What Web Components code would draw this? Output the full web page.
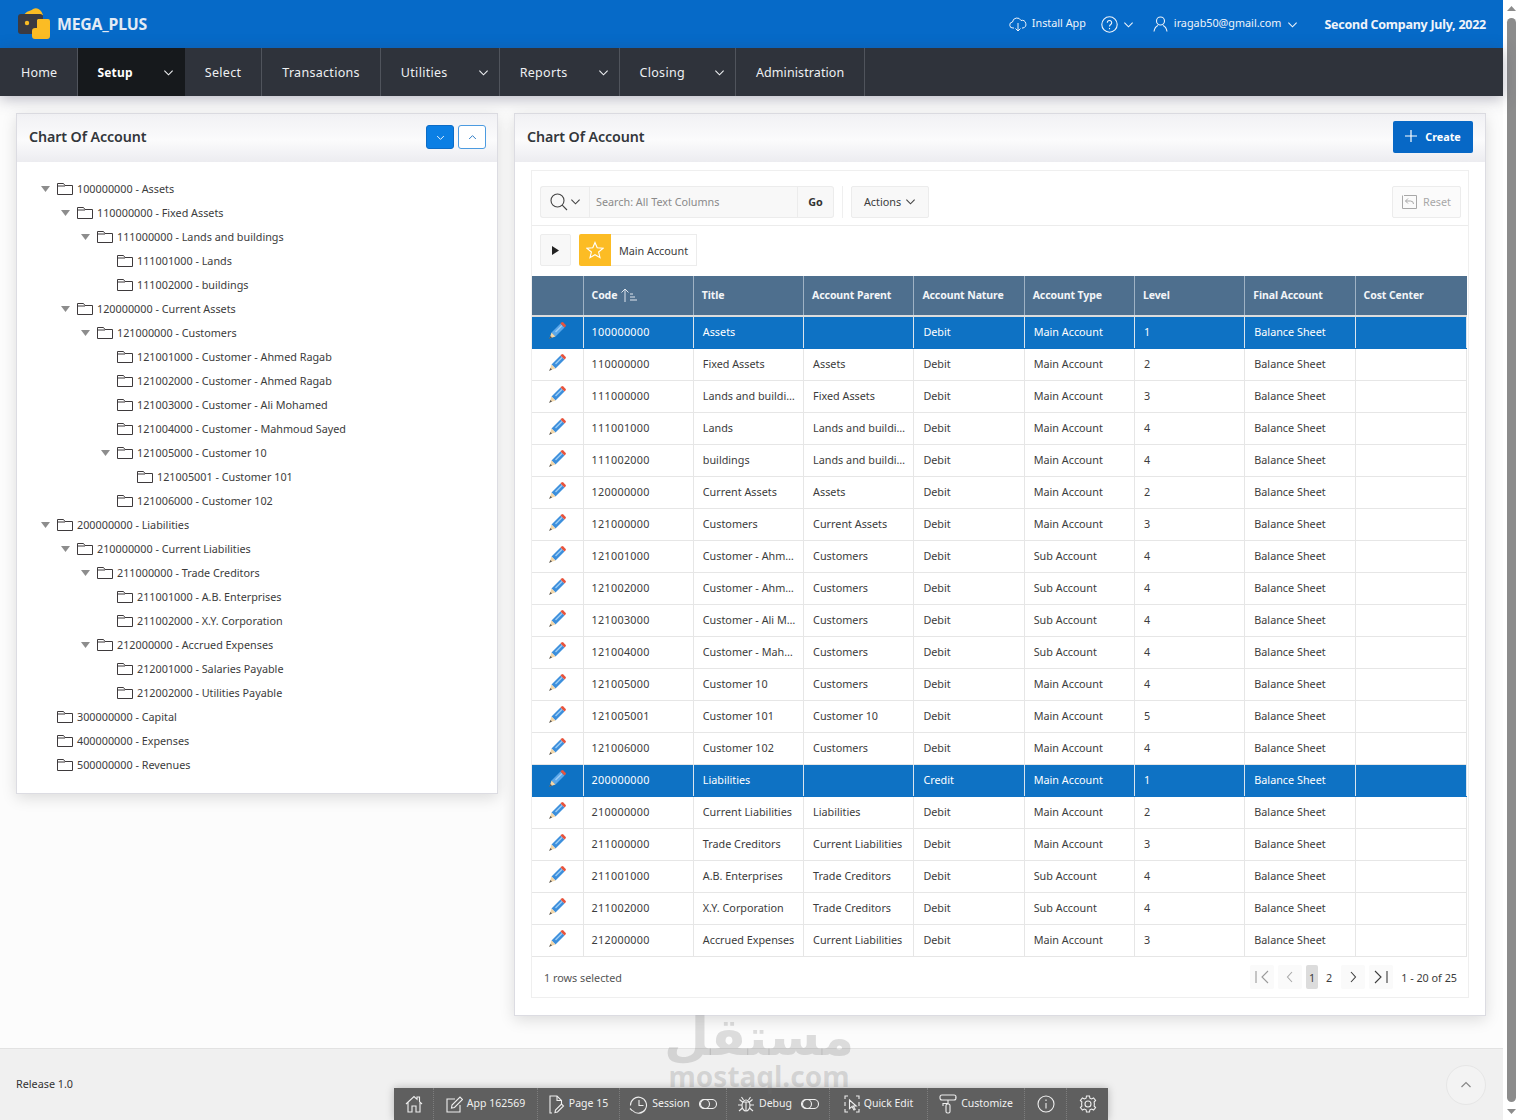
<!DOCTYPE html>
<html>
  <head>
    <meta charset="utf-8" />
    <title>Chart Of Account</title>
    <style>
      html, body { margin: 0; height: 1120px; overflow: hidden; }
      body { font: 11px "Noto Sans", sans-serif; color: #3c3c3c; background: #fcfcfc; }
    </style>
  </head>
  <body>
    <app-shell>
      <top-bar></top-bar>
      <main-nav>
        <nav-item first>Home</nav-item>
        <nav-item current caret>Setup</nav-item>
        <nav-item>Select</nav-item>
        <nav-item>Transactions</nav-item>
        <nav-item caret>Utilities</nav-item>
        <nav-item caret>Reports</nav-item>
        <nav-item caret style="--gap: 29px">Closing</nav-item>
        <nav-item style="--ls: .1px">Administration</nav-item>
      </main-nav>
      <page-body>
        <tree-panel>
          <tree-node open label="100000000 - Assets">
            <tree-node open label="110000000 - Fixed Assets">
              <tree-node open label="111000000 - Lands and buildings">
                <tree-node leaf label="111001000 - Lands"></tree-node>
                <tree-node leaf label="111002000 - buildings"></tree-node>
              </tree-node>
            </tree-node>
            <tree-node open label="120000000 - Current Assets">
              <tree-node open label="121000000 - Customers">
                <tree-node leaf label="121001000 - Customer - Ahmed Ragab"></tree-node>
                <tree-node leaf label="121002000 - Customer - Ahmed Ragab"></tree-node>
                <tree-node leaf label="121003000 - Customer - Ali Mohamed"></tree-node>
                <tree-node leaf label="121004000 - Customer - Mahmoud Sayed"></tree-node>
                <tree-node open label="121005000 - Customer 10">
                  <tree-node leaf label="121005001 - Customer 101"></tree-node>
                </tree-node>
                <tree-node leaf label="121006000 - Customer 102"></tree-node>
              </tree-node>
            </tree-node>
          </tree-node>
          <tree-node open label="200000000 - Liabilities">
            <tree-node open label="210000000 - Current Liabilities">
              <tree-node open label="211000000 - Trade Creditors">
                <tree-node leaf label="211001000 - A.B. Enterprises"></tree-node>
                <tree-node leaf label="211002000 - X.Y. Corporation"></tree-node>
              </tree-node>
              <tree-node open label="212000000 - Accrued Expenses">
                <tree-node leaf label="212001000 - Salaries Payable"></tree-node>
                <tree-node leaf label="212002000 - Utilities Payable"></tree-node>
              </tree-node>
            </tree-node>
          </tree-node>
          <tree-node leaf label="300000000 - Capital"></tree-node>
          <tree-node leaf label="400000000 - Expenses"></tree-node>
          <tree-node leaf label="500000000 - Revenues"></tree-node>
        </tree-panel>
        <report-panel>
          <grid-toolbar></grid-toolbar>
          <report-grid></report-grid>
          <grid-footer></grid-footer>
        </report-panel>
      </page-body>
      <page-footer></page-footer>
    </app-shell>

    <script>
      const FONT = '"Noto Sans", sans-serif';
      const chevron = (size, color, up) =>
        `<svg width="${size}" height="${size}" viewBox="0 0 12 12" fill="none" stroke="${color}" stroke-width="1.2"><path d="${up ? "M1.5 8 6 3.5 10.5 8" : "M1.5 4 6 8.5 10.5 4"}"/></svg>`;

      function makeRoot(el, html) {
        el.attachShadow({ mode: "open" }).innerHTML = html;
      }

      class AppShell extends HTMLElement {
        constructor() {
          super();
          makeRoot(this, `<style>
            :host { display: flex; width: 1519px; height: 1120px; position: relative; overflow: hidden; }
            .main { width: 1503px; display: flex; flex-direction: column; }
            .scroll { width: 16px; background: #fff; display: flex; flex-direction: column; align-items: center; }
            .arrow { height: 17px; display: flex; align-items: center; justify-content: center; }
            .thumb { flex: 1; width: 9px; border-radius: 5px; background: #8c8c8c; margin-top: 1px; margin-bottom: 1px; }
          </style>
          <div class="main"><slot></slot></div>
          <div class="scroll">
            <div class="arrow"><svg width="9" height="5"><path d="M0 5 4.5 0 9 5z" fill="#8c8c8c"/></svg></div>
            <div class="thumb"></div>
            <div class="arrow"><svg width="9" height="5"><path d="M0 0 4.5 5 9 0z" fill="#8c8c8c"/></svg></div>
          </div>`);
        }
      }

      class TopBar extends HTMLElement {
        constructor() {
          super();
          makeRoot(this, `<style>
            :host { display: flex; align-items: center; height: 48px; background: #066ac8; color: #f0f4fa; font-family: ${FONT}; flex: none; }
            .brand { display: flex; align-items: center; margin-left: 18px; font-size: 15.800px; font-weight: 700; color: #e3ebf5; letter-spacing: -.2px; }
            .brand svg { margin-right: 6px; }
            .right { margin-left: auto; display: flex; align-items: center; padding-right: 17px; font-size: 10.800px; }
            .right svg { display: block; }
            .right span { margin-top: -3px; }
            .install { display: flex; align-items: center; gap: 5px; margin-right: 15px; }
            .help { display: flex; align-items: center; gap: 5px; margin-right: 19px; }
            .user { display: flex; align-items: center; gap: 6px; margin-right: 26px; }
            .co { font-size: 12.500px; font-weight: 700; letter-spacing: -.25px; }
          </style>
          <div class="brand">
            <svg width="33" height="32" viewBox="0 0 33 32">
              <path d="M6 7C8 3 13 3 15 1c4-2 8 0 10 6z" fill="#fbbc24"/>
              <rect x="0" y="6" width="25" height="20" rx="3" fill="#3b3a41"/>
              <circle cx="9" cy="15" r="2.200" fill="#fbbc24"/>
              <path d="M20 11h10a2 2 0 0 1 2 2v15a3 3 0 0 1-3 3H17a3 3 0 0 1-3-3v-5a3 3 0 0 1 3-3h2v-8z" fill="#fbbc24"/>
            </svg>
            MEGA_PLUS
          </div>
          <div class="right">
            <div class="install">
              <svg width="18" height="16" viewBox="0 0 18 16" fill="none" stroke="#eef3fa" stroke-width="1"><path d="M5 12H4a3 3 0 0 1-.5-6A4.5 4.5 0 0 1 12 4.5 3.7 3.7 0 0 1 14 12h-1"/><path d="M9 7v8M6.5 12.5 9 15l2.500-2.500"/></svg>
              <span>Install App</span>
            </div>
            <div class="help">
              <svg width="17" height="17" viewBox="0 0 17 17" fill="none" stroke="#eef3fa" stroke-width="1.1"><circle cx="8.500" cy="8.500" r="7.700"/><path d="M6.300 6.700a2.200 2.200 0 1 1 3.400 1.800c-.9.600-1.200 1-1.200 2"/><path d="M8.500 12v1.200"/></svg>
              ${chevron(11, "#eef3fa")}
            </div>
            <div class="user">
              <svg width="15" height="16" viewBox="0 0 15 16" fill="none" stroke="#eef3fa" stroke-width="1.1"><circle cx="7.500" cy="5" r="4"/><path d="M1 15.500c.5-3 1.500-5 4-6M14 15.500c-.5-3-1.500-5-4-6"/></svg>
              <span>iragab50@gmail.com</span>
              ${chevron(11, "#eef3fa")}
            </div>
            <div class="co">Second Company July, 2022</div>
          </div>`);
        }
      }

      class MainNav extends HTMLElement {
        constructor() {
          super();
          makeRoot(this, `<style>
            :host { display: flex; height: 48px; background: #2f333b; flex: none; box-shadow: 0 3px 14px rgba(60,60,90,.35); position: relative; z-index: 1; }
          </style><slot></slot>`);
        }
      }

      class NavItem extends HTMLElement {
        constructor() {
          super();
          const caret = this.hasAttribute("caret");
          makeRoot(this, `<style>
            :host { display: flex; align-items: center; padding: 0 ${caret ? 10 : 20}px 0 20px; font: 12.500px ${FONT}; letter-spacing: var(--ls, .3px); color: #eef0f2; border-right: 1px solid #50545c; }
            :host([first]) { padding-left: 21px; letter-spacing: .2px; }
            :host([current]) { background: #16191c; font-size: 12px; font-weight: 700; letter-spacing: .2px; color: #fff; border-right-color: #16191c; padding-left: 19px; }
            svg { margin-left: var(--gap, 30px); }
          </style><slot></slot>${caret ? chevron(11, "#eef0f2") : ""}`);
        }
      }

      class PageBody extends HTMLElement {
        constructor() {
          super();
          makeRoot(this, `<style>
            :host { flex: 1; display: flex; align-items: flex-start; gap: 16px; padding: 17px 17px 0 16px; min-height: 0; }
          </style><slot></slot>`);
        }
      }

      const panelCss = `
        .panel { background: #fff; border: 1px solid #dcdce2; box-shadow: 0 4px 14px rgba(0,0,0,.13); box-sizing: border-box; }
        .head { height: 48px; padding-bottom: 2px; display: flex; align-items: center; box-sizing: border-box; background: linear-gradient(#f1f1f4, #fbfbfc 55%, #ececf0); }
        .head h2 { margin: 0 0 2px; font: 600 14.250px ${FONT}; color: #33373b; letter-spacing: -.1px; }
      `;

      class TreePanel extends HTMLElement {
        constructor() {
          super();
          makeRoot(this, `<style>
            :host { display: block; width: 482px; flex: none; font-family: ${FONT}; }
            ${panelCss}
            .panel { height: 681px; }
            .head { padding-left: 12px; padding-right: 11px; }
            .btns { margin-left: auto; display: flex; gap: 4px; }
            .btn { width: 28px; height: 24px; box-sizing: border-box; border-radius: 3px; display: flex; align-items: center; justify-content: center; }
            .on { background: #0b7fe4; border: 1px solid #0c6cc6; }
            .off { background: #fff; border: 1px solid #4c9be0; }
            .tree { padding: 14px 0 0 21px; }
          </style>
          <div class="panel">
            <div class="head">
              <h2>Chart Of Account</h2>
              <div class="btns">
                <div class="btn on">${chevron(9, "#fff")}</div>
                <div class="btn off">${chevron(9, "#1a6fc0", true)}</div>
              </div>
            </div>
            <div class="tree"><slot></slot></div>
          </div>`);
        }
      }

      class TreeNode extends HTMLElement {
        constructor() {
          super();
          const leaf = this.hasAttribute("leaf");
          makeRoot(this, `<style>
            :host { display: block; font: 10.800px ${FONT}; color: #3c3c3c; }
            .row { height: 24px; display: flex; align-items: center; white-space: nowrap; }
            .tog { width: 14px; margin-right: 5px; margin-top: 2px; display: flex; justify-content: center; flex: none; }
            .kids { padding-left: 20px; }
            svg { flex: none; display: block; }
            .fold { margin-right: 4px; margin-top: 2px; }
          </style>
          <div class="row">
            <span class="tog">${leaf ? "" : '<svg width="9" height="6"><path d="M0 0H9L4.500 6z" fill="#8d8d8d"/></svg>'}</span>
            <svg class="fold" width="16" height="12" viewBox="0 0 16 12" fill="none" stroke="#3e3a3c" stroke-width="1"><path d="M.5 11.500V.5h6l1.500 2h7.500v9z"/><path d="M.5 3h7.500" /></svg>
            <span>${this.getAttribute("label")}</span>
          </div>
          <div class="kids"><slot></slot></div>`);
        }
      }

      class ReportPanel extends HTMLElement {
        constructor() {
          super();
          makeRoot(this, `<style>
            :host { display: block; width: 972px; flex: none; font-family: ${FONT}; }
            ${panelCss}
            .panel { height: 903px; }
            .head { padding-left: 12px; padding-right: 12px; }
            .create { margin-left: auto; width: 80px; height: 32px; padding-bottom: 2px; box-sizing: border-box; background: #0768c6; color: #fff; border-radius: 2px; display: flex; align-items: center; justify-content: center; gap: 8px; font: 700 10.800px ${FONT}; }
            .body { padding: 8px 16px 0 16px; }
            .region { border: 1px solid #efefef; height: 828px; box-sizing: border-box; display: flex; flex-direction: column; }
          </style>
          <div class="panel">
            <div class="head">
              <h2>Chart Of Account</h2>
              <div class="create">
                <svg width="12" height="12" viewBox="0 0 13 13" stroke="#fff" stroke-width="1.300"><path d="M6.500 0v13M0 6.500h13"/></svg>
                Create
              </div>
            </div>
            <div class="body"><div class="region"><slot></slot></div></div>
          </div>`);
        }
      }

      class GridToolbar extends HTMLElement {
        constructor() {
          super();
          makeRoot(this, `<style>
            :host { display: block; font: 10.800px ${FONT}; color: #3c3c3c; }
            .one { height: 55px; box-sizing: border-box; padding: 15px 7px 0 8px; display: flex; border-bottom: 1px solid #ececec; }
            .box { height: 32px; box-sizing: border-box; border: 1px solid #ececec; background: #f8f8f8; display: flex; align-items: center; justify-content: center; padding-bottom: 1px; }
            .mag { width: 49px; gap: 2px; border-radius: 3px 0 0 3px; border-right: 0; }
            .in { width: 209px; justify-content: flex-start; padding-left: 6px; color: #8a8a8a; }
            .go { width: 36px; border-left: 0; font-weight: 700; border-radius: 0 3px 3px 0; color: #333; }
            .sep { width: 1px; height: 32px; background: #efefef; margin: 0 8px; }
            .act { width: 78px; gap: 4px; border-radius: 2px; }
            .reset { margin-left: auto; width: 69px; gap: 6px; background: #fbfbfb; color: #a8a8a8; border-radius: 2px; }
            .two { height: 50px; box-sizing: border-box; padding: 8px 8px 0 8px; display: flex; }
            .play { width: 31px; border-radius: 2px; margin-right: 8px; padding-bottom: 0; }
            .star { width: 32px; height: 32px; background: #fcbc24; display: flex; align-items: center; justify-content: center; border-radius: 2px 0 0 2px; }
            .lbl { width: 86px; height: 32px; box-sizing: border-box; border: 1px solid #ececec; border-left: 0; display: flex; align-items: center; justify-content: center; color: #3c3c3c; }
            svg { display: block; }
          </style>
          <div class="one">
            <div class="box mag">
              <svg width="18" height="18" viewBox="0 0 18 18" fill="none" stroke="#444" stroke-width="1.100"><circle cx="7.500" cy="7.500" r="6.500"/><path d="m12.200 12.200 4.800 4.800"/></svg>
              ${chevron(11, "#444")}
            </div>
            <div class="box in">Search: All Text Columns</div>
            <div class="box go">Go</div>
            <div class="sep"></div>
            <div class="box act">Actions ${chevron(11, "#444")}</div>
            <div class="box reset">
              <svg width="15" height="14" viewBox="0 0 15 14" fill="none" stroke="#a8a8a8" stroke-width="1"><path d="M2 .5h12.500v13H.5V.5"/><path d="M11.500 9a3 3 0 0 0-3-3H3.500M6 3.500 3.500 6 6 8.500"/></svg>
              Reset
            </div>
          </div>
          <div class="two">
            <div class="box play"><svg width="7" height="9"><path d="M0 0 7 4.500 0 9z" fill="#222"/></svg></div>
            <div class="star"><svg width="18" height="18" viewBox="0 0 18 18" fill="none" stroke="#fff" stroke-width="1.100"><path d="M9 1.500 11.200 6.800 17 7.300 12.600 11 14 16.700 9 13.700 4 16.700 5.400 11 1 7.300 6.800 6.800z"/></svg></div>
            <div class="lbl">Main Account</div>
          </div>`);
        }
      }

      const COLS = ["Code", "Title", "Account Parent", "Account Nature", "Account Type", "Level", "Final Account", "Cost Center"];
      const ROWS = [
        ["100000000", "Assets", "", "Debit", "Main Account", 1, 1],
        ["110000000", "Fixed Assets", "Assets", "Debit", "Main Account", 2],
        ["111000000", "Lands and buildings", "Fixed Assets", "Debit", "Main Account", 3],
        ["111001000", "Lands", "Lands and buildings", "Debit", "Main Account", 4],
        ["111002000", "buildings", "Lands and buildings", "Debit", "Main Account", 4],
        ["120000000", "Current Assets", "Assets", "Debit", "Main Account", 2],
        ["121000000", "Customers", "Current Assets", "Debit", "Main Account", 3],
        ["121001000", "Customer - Ahmed Ragab", "Customers", "Debit", "Sub Account", 4],
        ["121002000", "Customer - Ahmed Ragab", "Customers", "Debit", "Sub Account", 4],
        ["121003000", "Customer - Ali Mohamed", "Customers", "Debit", "Sub Account", 4],
        ["121004000", "Customer - Mahmoud Sayed", "Customers", "Debit", "Sub Account", 4],
        ["121005000", "Customer 10", "Customers", "Debit", "Main Account", 4],
        ["121005001", "Customer 101", "Customer 10", "Debit", "Main Account", 5],
        ["121006000", "Customer 102", "Customers", "Debit", "Main Account", 4],
        ["200000000", "Liabilities", "", "Credit", "Main Account", 1, 1],
        ["210000000", "Current Liabilities", "Liabilities", "Debit", "Main Account", 2],
        ["211000000", "Trade Creditors", "Current Liabilities", "Debit", "Main Account", 3],
        ["211001000", "A.B. Enterprises", "Trade Creditors", "Debit", "Sub Account", 4],
        ["211002000", "X.Y. Corporation", "Trade Creditors", "Debit", "Sub Account", 4],
        ["212000000", "Accrued Expenses", "Current Liabilities", "Debit", "Main Account", 3],
      ];
      const PENCIL = `<svg width="18" height="18" viewBox="0 0 18 18"><path class="b" d="M3.500 10.500 12.500 1.500 16.500 5.500 7.500 14.500z" fill="#3d8fdc"/><path d="M7 9.500 13.500 3 14.500 4 8 10.500z" fill="#9bcdf5"/><path d="M12.500 1.500 13.500.5a1.300 1.300 0 0 1 1.800 0l2.200 2.200a1.300 1.300 0 0 1 0 1.800L16.500 5.500z" fill="#e8533c"/><path d="M3.500 10.500 7.500 14.500 1.500 16.500z" fill="#f3d6a8"/><path d="M2.500 14 4 15.500 1 17z" fill="#555"/></svg>`;

      class ReportGrid extends HTMLElement {
        constructor() {
          super();
          const sort = `<svg width="17" height="14" viewBox="0 0 17 14" fill="none" stroke="#dfe6ee" stroke-width="1"><path d="M5 14V1M1.500 4.500 5 1l3.500 3.500"/><path d="M10 6h3M10 9h5M10 12h7"/></svg>`;
          const head = COLS.map((c, i) => `<th>${c}${i === 0 ? " " + sort : ""}</th>`).join("");
          const rows = ROWS.map((r) => `<tr class="${r[6] ? "sel" : ""}">
              <td class="ed">${PENCIL}</td>${r.slice(0, 6).map((v) => `<td>${v}</td>`).join("")}<td>Balance Sheet</td><td></td>
            </tr>`).join("");
          makeRoot(this, `<style>
            :host { display: block; font: 10.800px ${FONT}; color: #3c3c3c; }
            table { border-collapse: collapse; table-layout: fixed; width: 935px; }
            col.c { width: 110.300px; }
            th { height: 40px; padding: 0 8px 2px; box-sizing: border-box; background: #4e6f8e; color: #f2f5f8; font-size: 10.500px; font-weight: 700; text-align: left; letter-spacing: -.1px; border-right: 1px solid #9fb2c4; border-bottom: 2px solid #dcdcdc; white-space: nowrap; }
            th svg { vertical-align: -3px; }
            th:last-child { border-right: 0; }
            td { height: 32px; padding: 0 7px 2px 9px; box-sizing: border-box; border: 1px solid #e6e6e6; border-left: 0; white-space: nowrap; overflow: hidden; text-overflow: ellipsis; }
            td:last-child { border-right: 1px solid #e6e6e6; }
            td:nth-child(2) { letter-spacing: .3px; padding-left: 8px; }
            td.ed { padding: 0; text-align: center; }
            td.ed svg { display: inline-block; vertical-align: top; margin-bottom: 2px; }
            .sel td { background: #0e72c4; color: #fff; border-right-color: #d8e4ee; border-bottom-color: #0e72c4; }
            .sel .b { fill: #5aa7ea; }
          </style>
          <table>
            <colgroup><col style="width:51px" />${COLS.slice(1).map(() => '<col class="c" />').join("")}<col /></colgroup>
            <thead><tr><th></th>${head}</tr></thead>
            <tbody>${rows}</tbody>
          </table>`);
        }
      }

      class GridFooter extends HTMLElement {
        constructor() {
          super();
          const pg = (d, color) => `<span class="pb"><svg width="16" height="14" viewBox="0 0 16 14" fill="none" stroke="${color}" stroke-width="1.100"><path d="${d}"/></svg></span>`;
          makeRoot(this, `<style>
            :host { display: flex; align-items: center; height: 40px; padding: 1px 11px 0 12px; box-sizing: border-box; font: 10.800px ${FONT}; color: #555; }
            .pager { margin-left: auto; display: flex; align-items: center; gap: 4px; color: #3c3c3c; }
            .pb { width: 24px; height: 24px; background: #fafafa; border-radius: 2px; display: flex; align-items: center; justify-content: center; }
            .n { width: 12px; height: 24px; display: flex; align-items: center; justify-content: center; border-radius: 2px; }
            .cur { background: #dcdcdc; }
            .two { margin: 0 2px 0 1px; }
            .of { margin-left: 4px; }
          </style>
          <span>1 rows selected</span>
          <div class="pager">
            ${pg("M2 1v12M14 1 8 7l6 6", "#9a9a9a")}
            ${pg("M10 2 5.500 7l4.500 5", "#a8a8a8")}
            <span class="n cur">1</span><span class="n two">2</span>
            ${pg("M6 2l4.500 5L6 12", "#3c3c3c")}
            ${pg("M2 1l6 6-6 6M14 1v12", "#3c3c3c")}
            <span class="of">1 - 20 of 25</span>
          </div>`);
        }
      }

      class PageFooter extends HTMLElement {
        constructor() {
          super();
          makeRoot(this, `<style>
            :host { display: flex; align-items: center; height: 72px; flex: none; box-sizing: border-box; background: #f0f0f0; border-top: 1px solid #e2e2e2; padding: 0 17px 0 16px; font: 10.800px ${FONT}; color: #333; }
            .rel { margin-top: -2px; }
            .up { margin-left: auto; width: 38px; height: 38px; border-radius: 50%; background: #f3f3f3; border: 1px solid #e6e6e6; display: flex; align-items: center; justify-content: center; }
            .mark { position: absolute; left: 639px; top: 1007px; width: 240px; text-align: center; color: rgba(110,110,110,.22); pointer-events: none; z-index: 3; }
            .ar { font: 700 52px/60px "DejaVu Sans", sans-serif; display: block; }
            .en { font: 700 28px/28px ${FONT}; display: block; margin-top: -5px; }
          </style>
          <span class="rel">Release 1.0</span>
          <div class="up">${chevron(12, "#888", true)}</div>
          <div class="mark"><span class="ar">مستقل</span><span class="en">mostaql.com</span></div>
          <dev-toolbar></dev-toolbar>`);
        }
      }

      class DevToolbar extends HTMLElement {
        constructor() {
          super();
          const s = 'fill="none" stroke="#eee" stroke-width="1.100"';
          const toggle = `<svg width="18" height="10" viewBox="0 0 18 10" ${s}><rect x=".5" y=".5" width="17" height="9" rx="4.500"/><circle cx="6" cy="5" r="4.500"/></svg>`;
          const item = (w, icon, label, extra) => `<div class="it" style="width:${w}px">${icon}${label ? `<span class="t">${label}</span>` : ""}${extra || ""}</div>`;
          makeRoot(this, `<style>
            :host { position: absolute; left: 394px; top: 1088px; width: 714px; height: 32px; background: #5f5f5f; display: flex; z-index: 2; font: 10.500px ${FONT}; color: #f0f0f0; box-shadow: 0 0 8px rgba(0,0,0,.25); }
            .it { height: 32px; box-sizing: border-box; display: flex; align-items: center; justify-content: center; gap: 4px; border-right: 1px dotted #7d7d7d; flex: none; }
            .it:last-child { border-right: 0; }
            .t { margin-top: -3px; }
            .gap { margin-left: 5px; display: flex; }
          </style>
          ${item(40, `<svg width="18" height="18" viewBox="0 0 18 18" ${s}><path d="M1 9 9 1.500l3 2.800V2h2.500v4.600L17 9M3 7.500V17h4v-6h4v6h4V7.500"/></svg>`)}
          ${item(104, `<svg width="17" height="17" viewBox="0 0 17 17" ${s}><path d="M14 9v7H1V3h8"/><path d="M5.500 12 6 9l8-8 2.500 2.500-8 8z"/></svg>`, "App 162569")}
          ${item(82, `<svg width="16" height="19" viewBox="0 0 16 19" ${s}><path d="M3 18H1V1h7l4.500 4.500V9"/><path d="M8 1v4.500h4.500M6 17.500l.5-2.500 6-6 2 2-6 6z"/></svg>`, "Page 15")}
          ${item(107, `<svg width="19" height="19" viewBox="0 0 19 19" ${s}><path d="M3.500 15.500a8 8 0 1 0-2-5"/><path d="M1 13.500l2.500 2.300M10 5v5.500h4.500"/></svg>`, "Session", `<span class="gap">${toggle}</span>`)}
          ${item(103, `<svg width="18" height="18" viewBox="0 0 18 18" ${s}><ellipse cx="9" cy="10.500" rx="4" ry="5.500"/><path d="M5.500 7h7M9 7v9M6.500 5l-2-3M11.500 5l2-3M5 10H1M13 10h4M5.500 13 2 16M12.500 13l3.500 3M5.500 7 2.500 4.500M12.500 7l3-2.500"/></svg>`, "Debug", `<span class="gap">${toggle}</span>`)}
          ${item(98, `<svg width="16" height="18" viewBox="0 0 16 18" ${s}><path d="M1 4V1h3M12 1h3v3M15 14v3h-3M4 17H1v-3M1 7v4M15 7v4"/><path d="M5.500 5v8.500l2.500-2 2 3.500 1.200-.7-2-3.300h3z"/></svg>`, "Quick Edit")}
          ${item(97, `<svg width="18" height="20" viewBox="0 0 18 20" ${s}><rect x="1" y="1" width="16" height="5" rx="2"/><path d="M17 3.500h-.5M9 6v3.500H4V12"/><rect x="7" y="10" width="4" height="9" rx="1.500"/></svg>`, "Customize")}
          ${item(42, `<svg width="18" height="18" viewBox="0 0 18 18" ${s}><circle cx="9" cy="9" r="8"/><path d="M9 8v5.500M9 4.500v1.500"/></svg>`)}
          ${item(41, `<svg width="18" height="18" viewBox="0 0 18 18" ${s}><circle cx="9" cy="9" r="3"/><path d="M7.500 1h3l.4 2.200 1.700.8 2-1.100 2 2.500-1.500 1.600.3 2-.3 2 1.500 1.600-2 2.500-2-1.100-1.700.8L10.500 17h-3l-.4-2.200-1.700-.8-2 1.100-2-2.500L2.900 11l-.3-2 .3-2L1.400 5.400l2-2.500 2 1.100 1.700-.8z"/></svg>`)}`);
        }
      }

      customElements.define("app-shell", AppShell);
      customElements.define("top-bar", TopBar);
      customElements.define("main-nav", MainNav);
      customElements.define("nav-item", NavItem);
      customElements.define("page-body", PageBody);
      customElements.define("tree-panel", TreePanel);
      customElements.define("tree-node", TreeNode);
      customElements.define("report-panel", ReportPanel);
      customElements.define("grid-toolbar", GridToolbar);
      customElements.define("report-grid", ReportGrid);
      customElements.define("grid-footer", GridFooter);
      customElements.define("page-footer", PageFooter);
      customElements.define("dev-toolbar", DevToolbar);
    </script>
  </body>
</html>
